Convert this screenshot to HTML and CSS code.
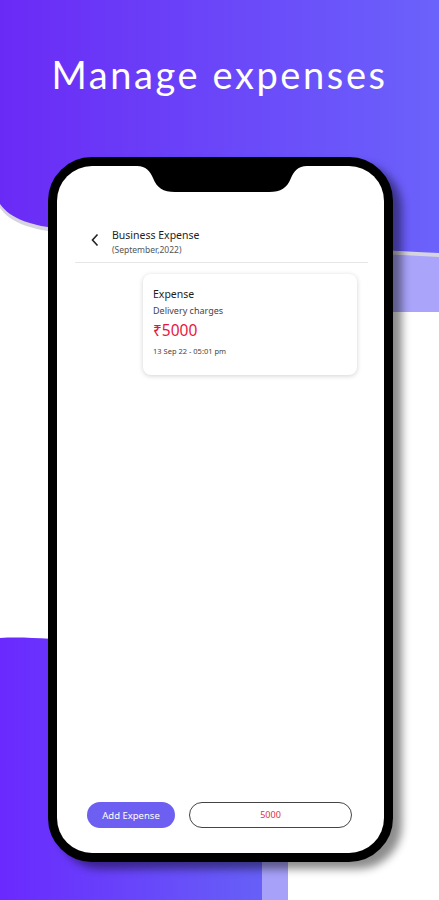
FILE: index.html
```html
<!DOCTYPE html>
<html lang="en">

<head>
    <meta charset="UTF-8">
    <meta name="viewport" content="width=device-width, initial-scale=1.0">
    <title>Manage expenses</title>
    <link rel="stylesheet" href="styles.css">
</head>

<body>

    <div class="halaman">
        <svg class="latar" width="439" height="900" viewBox="0 0 439 900">
            <defs>
                <linearGradient id="ungu" x1="0" y1="0" x2="1" y2="0">
                    <stop offset="0" stop-color="#6a2af6" />
                    <stop offset="1" stop-color="#6b62fb" />
                </linearGradient>
                <linearGradient id="unguBawah" x1="0" y1="0" x2="1" y2="0">
                    <stop offset="0" stop-color="#6a29fe" />
                    <stop offset="1" stop-color="#6660f7" />
                </linearGradient>
            </defs>
            <!-- pita lavender di kanan atas -->
            <path d="M300 240 H439 V312 H330 Z" fill="#aaa4fb" />
            <!-- bayangan abu-abu di bawah gelombang -->
            <path d="M0 208 C 10 222, 30 232, 80 234 C 200 240, 330 252, 439 257 V0 H0 Z" fill="#d6d4de" />
            <path d="M0 204 C 10 218, 30 228, 80 230 C 200 236, 330 248, 439 253 V0 H0 Z" fill="url(#ungu)" />
            <!-- blok bawah -->
            <rect x="240" y="640" width="48" height="260" fill="#a7a1fa" />
            <path d="M0 638 C 30 636, 60 641, 100 640 H262 V900 H0 Z" fill="url(#unguBawah)" />
        </svg>

        <h1 class="judul">Manage expenses</h1>

        <div class="ponsel">
            <div class="layar">
                <svg class="poni" width="170" height="27" viewBox="0 0 170 27">
                    <path d="M0 0 C 9 0, 13 5, 16 12 C 20 22, 26 26, 38 26 H132 C 144 26, 150 22, 154 12 C 157 5, 161 0, 170 0 Z" fill="#000" />
                </svg>

                <div class="kepala">
                    <svg class="kembali" width="10" height="14" viewBox="0 0 10 14">
                        <polyline points="7.5,1.5 2.5,7 7.5,12.5" fill="none" stroke="#222" stroke-width="1.6" />
                    </svg>
                    <div>
                        <div class="kepala-judul">Business Expense</div>
                        <div class="kepala-sub">(September,2022)</div>
                    </div>
                </div>

                <div class="kartu">
                    <div class="kartu-jenis">Expense</div>
                    <div class="kartu-ket">Delivery charges</div>
                    <div class="kartu-jumlah">₹5000</div>
                    <div class="kartu-waktu">13 Sep 22 - 05:01 pm</div>
                </div>

                <div class="aksi">
                    <button class="tombol-tambah">Add Expense</button>
                    <div class="total">5000</div>
                </div>
            </div>
        </div>
    </div>

</body>

</html>
```

FILE: styles.css
```css
body {
    margin: 0;
    font-family: "Noto Sans", "Open Sans", sans-serif;
}

.halaman {
    position: relative;
    width: 439px;
    height: 900px;
    overflow: hidden;
    background-color: white;
}

.latar {
    position: absolute;
    left: 0;
    top: 0;
}

.judul {
    position: relative;
    margin: 0;
    padding-top: 52px;
    height: 157px;
    box-sizing: border-box;
    text-align: center;
    color: white;
    font-family: "Lato", sans-serif;
    font-weight: 400;
    font-size: 38px;
    line-height: 44px;
    letter-spacing: 2.6px;
}

.ponsel {
    position: relative;
    margin-left: 48px;
    width: 345px;
    height: 705px;
    box-sizing: border-box;
    border: 9px solid black;
    border-radius: 44px;
    background-color: black;
    box-shadow: 9px 7px 9px rgba(0, 0, 0, 0.45);
}

.layar {
    position: relative;
    height: 100%;
    display: flex;
    flex-direction: column;
    background-color: white;
    border-radius: 35px;
    overflow: hidden;
}

.poni {
    position: absolute;
    left: 80px;
    top: 0;
}

.kepala {
    margin: 62px 16px 0 18px;
    padding: 0 0 6px 15px;
    display: flex;
    align-items: center;
    gap: 12px;
    border-bottom: 1px solid #e6e6e6;
}

.kembali {
    margin-top: -4px;
}

.kepala-judul {
    font-size: 10.5px;
    color: #1e1e1e;
    line-height: 15px;
}

.kepala-sub {
    font-size: 8.5px;
    color: #555;
    line-height: 13px;
}

.kartu {
    margin: 11px 0 0 86px;
    width: 214px;
    height: 101px;
    box-sizing: border-box;
    padding: 13px 10px 12px;
    border-radius: 8px;
    background-color: white;
    box-shadow: 0 1px 5px rgba(0, 0, 0, 0.18);
}

.kartu-jenis {
    font-size: 10.5px;
    color: #1e1e1e;
    line-height: 15px;
}

.kartu-ket {
    font-size: 9px;
    color: #444;
    line-height: 13px;
    margin-top: 2px;
}

.kartu-jumlah {
    font-size: 15.5px;
    color: #e8163c;
    line-height: 22px;
    margin-top: 2px;
}

.kartu-waktu {
    font-size: 7.5px;
    color: #444;
    line-height: 11px;
    margin-top: 5px;
}

.aksi {
    margin: auto 32px 25px 30px;
    display: flex;
    gap: 14px;
}

.tombol-tambah {
    width: 88px;
    height: 26px;
    border: none;
    border-radius: 13px;
    background-color: #6d5ff1;
    color: white;
    font-family: "Noto Sans", sans-serif;
    font-size: 9.5px;
    padding: 0;
}

.total {
    flex: 1;
    height: 26px;
    box-sizing: border-box;
    border: 1px solid #444;
    border-radius: 13px;
    text-align: center;
    line-height: 24px;
    font-size: 9px;
    color: #e0304a;
}
```
